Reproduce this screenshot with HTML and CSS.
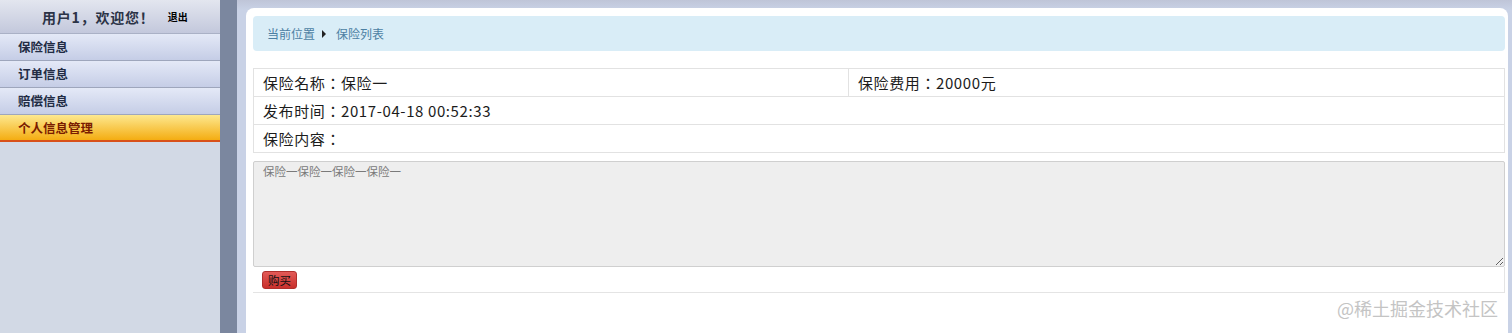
FILE: index.html
```html
<!DOCTYPE html>
<html>
<head>
<meta charset="utf-8" />
<title>保险列表</title>
<link rel="stylesheet" href="styles.css">
</head>
<body>
<div class="layout">
    <!-- Menu de gauche -->
    <aside class="sidebar">
        <div class="user_bar">
            <span class="user_name">用户1，欢迎您！</span>
            <a class="logout">退出</a>
        </div>
        <ul class="menu">
            <li class="menu_item">保险信息</li>
            <li class="menu_item">订单信息</li>
            <li class="menu_item">赔偿信息</li>
            <li class="menu_item active">个人信息管理</li>
        </ul>
    </aside>

    <div class="divider"></div>

    <!-- Contenu -->
    <main class="frame">
        <div class="panel">
            <div class="breadcrumb">
                <span class="crumb">当前位置</span>
                <span class="crumb_arrow"></span>
                <span class="crumb">保险列表</span>
            </div>

            <table class="info">
                <tr>
                    <td class="col_name">保险名称：保险一</td>
                    <td>保险费用：20000元</td>
                </tr>
                <tr>
                    <td colspan="2">发布时间：2017-04-18 00:52:33</td>
                </tr>
                <tr>
                    <td colspan="2">保险内容：</td>
                </tr>
            </table>

            <textarea class="content" readonly>保险一保险一保险一保险一</textarea>
            <div class="actions">
                <button class="buy">购买</button>
            </div>

            <div class="watermark">@稀土掘金技术社区</div>
        </div>
    </main>
</div>
</body>
</html>
```

FILE: styles.css
```css
body {
    margin: 0;
    padding: 0;
    font-family: "Noto Sans CJK SC", "Noto Sans", sans-serif;
    text-spacing-trim: space-all;
    font-feature-settings: "chws" 0, "halt" 0;
    overflow: hidden;
}

.layout {
    display: flex;
    height: 333px;
}

/* Menu */
.sidebar {
    width: 220px;
    background: #d2d9e5;
    flex-shrink: 0;
}

.user_bar {
    height: 34px;
    display: flex;
    align-items: center;
    padding-left: 42px;
    box-sizing: border-box;
    background: linear-gradient(#e3e6ef, #c3c8dc);
    border-bottom: 1px solid #aab1c6;
}

.user_name {
    font-size: 14px;
    font-weight: bold;
    letter-spacing: 0.8px;
    color: #2b3346;
}

.logout {
    margin-left: 13px;
    font-size: 10px;
    font-weight: bold;
    color: #000;
}

.menu {
    list-style: none;
    margin: 0;
    padding: 0;
}

.menu_item {
    height: 27px;
    line-height: 26px;
    padding-left: 18px;
    box-sizing: border-box;
    font-size: 12.5px;
    font-weight: bold;
    color: #222c44;
    background: linear-gradient(#e4e9f7, #c5cde6);
    border-bottom: 1px solid #9ea6bc;
}

.menu_item.active {
    color: #7a1c00;
    background: linear-gradient(#fde88f, #f4ad12);
    border-bottom: 2px solid #d8501a;
}

.divider {
    width: 17px;
    flex-shrink: 0;
    background: #7b879f;
}

/* Contenu */
.frame {
    flex: 1;
    background: linear-gradient(#bfc5d8 0, #c9d2e6 10px);
    padding: 8px 4px 0 9px;
}

.panel {
    position: relative;
    height: 100%;
    box-sizing: border-box;
    background: #fff;
    border-radius: 8px 8px 0 0;
    padding: 8px 3px 0 7px;
}

.breadcrumb {
    height: 35px;
    display: flex;
    align-items: center;
    padding-left: 14px;
    background: #d9edf7;
    border-radius: 4px;
    font-size: 12px;
    color: #4c7fa3;
}

.crumb_arrow {
    width: 0;
    height: 0;
    margin: 0 10px 0 7px;
    border-top: 4px solid transparent;
    border-bottom: 4px solid transparent;
    border-left: 4px solid #222;
}

.info {
    width: 100%;
    margin-top: 17px;
    border-collapse: collapse;
    font-family: "Noto Sans CJK JP", "Noto Sans CJK SC", sans-serif;
    font-size: 15px;
    letter-spacing: 0.6px;
    color: #1c1c1c;
}

.info td {
    height: 27px;
    padding: 0 0 0 9px;
    border: 1px solid #e2e2e2;
}

.info .col_name {
    width: 585px;
}

.content {
    display: block;
    width: 100%;
    height: 106px;
    margin-top: 8px;
    box-sizing: border-box;
    padding: 1px 9px;
    background: #eeeeee;
    border: 1px solid #cfcfcf;
    border-radius: 2px;
    font-family: "Noto Sans CJK SC", sans-serif;
    font-size: 11.5px;
    color: #7a7a7a;
}

.actions {
    height: 26px;
    box-sizing: border-box;
    padding: 4px 0 0 9px;
    border-right: 1px solid #e4e4e4;
    border-bottom: 1px solid #e4e4e4;
}

.buy {
    display: block;
    height: 18px;
    padding: 0 5px;
    background: linear-gradient(#e25a57, #c9302c);
    border: 1px solid #b0302c;
    border-radius: 3px;
    font-family: "Noto Sans CJK SC", sans-serif;
    font-size: 11.5px;
    line-height: 16px;
    color: #111;
}

.watermark {
    position: absolute;
    right: 10px;
    top: 287px;
    font-size: 18px;
    color: #c4c4c4;
}
```
